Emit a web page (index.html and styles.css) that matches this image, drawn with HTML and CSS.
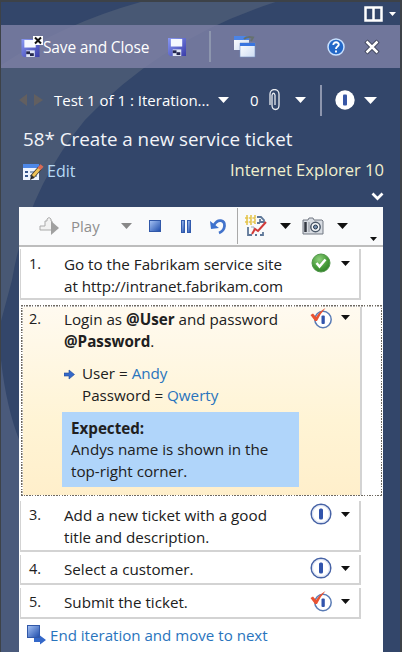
FILE: index.html
```html
<!DOCTYPE html>
<html lang="en">
<head>
<meta charset="utf-8">
<title>Test Runner</title>
<link rel="stylesheet" href="styles.css">
</head>
<body>
<svg class="defs" width="0" height="0" aria-hidden="true">
  <defs>
    <linearGradient id="blue" x1="0" y1="0" x2="1" y2="1"><stop offset="0" stop-color="#a9c5f5"/><stop offset="1" stop-color="#1c4bab"/></linearGradient>
    <linearGradient id="disk" x1="0" y1="0" x2="1" y2="1"><stop offset="0" stop-color="#8898f5"/><stop offset="1" stop-color="#3a3da8"/></linearGradient>
    <linearGradient id="win" x1="0" y1="0" x2="1" y2="1"><stop offset="0" stop-color="#fff"/><stop offset="1" stop-color="#cddcf2"/></linearGradient>
    <radialGradient id="green" cx=".4" cy=".3" r=".8"><stop offset="0" stop-color="#8ed07c"/><stop offset=".6" stop-color="#459a38"/><stop offset="1" stop-color="#2b7a26"/></radialGradient>
  </defs>
  <symbol id="floppy" viewBox="0 0 19 19"><path d="M0 0H19V19H2L0 17Z" fill="url(#disk)"/><path d="M3 1H15V9H3Z" fill="#f5f8ff"/><path d="M5 12H14V19H5Z" fill="#dfe5f5"/><path d="M5 13H9V16H5Z" fill="#23264d"/><path d="M9 15h4v3h-4z" fill="#23264d"/></symbol>
  <symbol id="active" viewBox="0 0 22 22"><circle cx="11" cy="11" r="9.800" fill="#fff" stroke="#4763a6" stroke-width="1.500"/><circle cx="11" cy="11" r="8.500" fill="none" stroke="#d5def1"/><rect x="9" y="5.500" width="4" height="11" rx="1.500" fill="#3154ac"/></symbol>
  <symbol id="verify" viewBox="0 0 22 22"><circle cx="13" cy="12.500" r="8.200" fill="#fff" stroke="#597bb5" stroke-width="1.500"/><rect x="11.500" y="8.500" width="3.300" height="8.500" rx="1" fill="#3154ac"/><path d="M.5 8L3 6.500L6 10Q10 4 15.500 1Q10 7 7 14H5Z" fill="#e95332"/></symbol>
  <symbol id="tri" viewBox="0 0 10 6" preserveAspectRatio="none"><path d="M0 0H10L5 6Z" fill="currentColor"/></symbol>
</svg>
<main class="runner">
  <svg class="backdrop" width="402" height="652" viewBox="0 0 402 652">
    <path d="M0 66Q65 22 148 0H282Q164 36 85 120Q27 190 12 280L0 325Z" fill="#485874"/>
    <path d="M0 350Q5 405 20 442V652H0Z" fill="#4a5a7b"/>
  </svg>
  <header class="caption">
    <svg class="columns" width="19" height="16"><path d="M1.500 1.500H17.500V14.500H1.500ZM9.500 1V15" fill="none" stroke="#fff" stroke-width="2.500"/></svg>
    <svg class="tri s7"><use href="#tri"/></svg>
  </header>
  <div class="toolbar">
    <svg class="saveclose" width="22" height="22"><use href="#floppy" x="0" y="3" width="19" height="18"/><rect x="12" y="0" width="10" height="9" fill="#fff"/><path d="M14 1.500L20 7.500M20 1.500L14 7.500" stroke="#111" stroke-width="2"/></svg>
    <span class="t save">Save and Close</span>
    <svg class="disk" width="18" height="18"><use href="#floppy" width="18" height="18"/></svg>
    <i class="rule"></i>
    <svg class="windows" width="23" height="23"><path d="M1 1H16V15H1Z" fill="url(#win)"/><path d="M1 1H16V5H1Z" fill="#4c84e6"/><path d="M11 4Q14 1 20 2.500L18 6" fill="none" stroke="#66716f" stroke-width="2"/><path d="M7 8H22V22H7Z" fill="url(#win)" stroke="#7792c4" stroke-width=".6"/><path d="M7 8H22V11H7Z" fill="#3975df"/></svg>
    <svg class="help" width="18" height="18"><circle cx="9" cy="9" r="8" fill="#2368c8" stroke="#c9e1ff" stroke-width="1.500"/><path d="M6.300 7C6.300 3.200 12 3.600 11.800 6.700C11.600 8.700 9 8.500 9 11M9 12.500V14.500" fill="none" stroke="#fff" stroke-width="1.900"/></svg>
    <svg class="close" width="16" height="16"><path d="M2 2L14 14M14 2L2 14" stroke="#3b4055" stroke-width="4.500"/><path d="M2.500 2.500L13.500 13.500M13.500 2.500L2.500 13.500" stroke="#fff" stroke-width="2.500"/></svg>
  </div>
  <div class="nav">
    <svg class="arrows" width="26" height="12"><path d="M9 0V12L1 6ZM16 0V12L25 6Z" fill="#625f60"/></svg>
    <span class="t test">Test 1 of 1 : Iteration...</span>
    <svg class="tri s10 a"><use href="#tri"/></svg>
    <span class="t count">0</span>
    <svg class="clip" width="12" height="22"><path d="M3 6V16C3 22 10 22 10 16V5C10-1 1-1 1 5V16M6 6V16M3 6Q4.500 2.500 6 6" fill="none" stroke="#e8ebf0" stroke-width="1.300"/></svg>
    <svg class="tri s10 b"><use href="#tri"/></svg>
    <i class="rule"></i>
    <svg class="state" width="20" height="20"><circle cx="10" cy="10" r="9.700" fill="#fff"/><rect x="8" y="4.500" width="4" height="11" rx="1" fill="#3857a6"/></svg>
    <svg class="tri s13"><use href="#tri"/></svg>
  </div>
  <h1 class="t title">58* Create a new service ticket</h1>
  <div class="meta">
    <svg class="pencil" width="22" height="18"><path d="M1 1H17V17H1Z" fill="#eef4ff"/><path d="M1 1H17V5H1Z" fill="#4e88e8"/><path d="M3 8h3v2H3zM3 12h3v2H3z" fill="#36568f"/><path d="M8 9H15M8 13H15" stroke="#93a8c6" stroke-width="2"/><path d="M10 14L18 5" stroke="#3c372d" stroke-width="4.500"/><path d="M11 13L18 5" stroke="#eec258" stroke-width="3"/><path d="M17 6L20 2.500" stroke="#d96b55" stroke-width="4"/><path d="M8 17L9 13L12 15Z" fill="#222"/></svg>
    <span class="t edit">Edit</span>
    <span class="t config">Internet Explorer 10</span>
  </div>
  <div class="expand"><svg width="13" height="9"><path d="M1.500 1.500L6.500 6.500L11.500 1.500" fill="none" stroke="#fff" stroke-width="2.700"/></svg></div>
  <section class="panel">
    <div class="play">
      <svg class="go" width="21" height="19"><path d="M1 9H6V4H8V2L10 .5L12 2V4H13V13H1Z" fill="#f2f2f2" stroke="#aaa"/><path d="M12 4L20 11L12 18Z" fill="#a0a0a0"/></svg>
      <span class="t playtext">Play</span>
      <svg class="tri s10 gray"><use href="#tri"/></svg>
      <svg class="stop" width="12" height="12"><rect x=".5" y=".5" width="11" height="11" fill="url(#blue)" stroke="#3158a8"/></svg>
      <svg class="pause" width="10" height="13"><rect x=".5" y=".5" width="3" height="12" fill="url(#blue)" stroke="#315aad"/><rect x="6.500" y=".5" width="3" height="12" fill="url(#blue)" stroke="#315aad"/></svg>
      <svg class="undo" width="17" height="17"><path d="M4 7C8 0 15 2 14.500 8Q14 13 9 15" fill="none" stroke="#4273cb" stroke-width="2.800"/><path d="M0 3L1 11L9 10Z" fill="#3c72cf"/></svg>
      <i class="split"></i>
      <svg class="bug" width="22" height="22"><path d="M0 3H11M0 7H11M2 0V10M6 0V10M10 0V9" stroke="#e5c650" stroke-width="1.600" stroke-dasharray="3 .7"/><path d="M12 2H16L19 5V7H15V4M3 12V20H7M10 20H12M15 20H18V17M12 8H15" fill="none" stroke="#5f7899" stroke-width="1.800"/><path d="M6 12H9V15" stroke="#9baabd" fill="none"/><path d="M7 19L10 14L13 16L21 7" fill="none" stroke="#d13b39" stroke-width="2"/></svg>
      <svg class="tri s10 black c"><use href="#tri"/></svg>
      <svg class="camera" width="22" height="18"><path d="M1 3H6L7 1H11L12 3H20L21 4V17H1Z" fill="#d8dce2" stroke="#727983"/><path d="M3.500 5V15" stroke="#343941" stroke-width="2.500"/><path d="M7 5V15" stroke="#8b919a"/><circle cx="13.500" cy="10" r="4.700" fill="#f6f8fa" stroke="#4c5969" stroke-width="1.500"/><circle cx="13.500" cy="10" r="2" fill="#7891b0" stroke="#27384c"/></svg>
      <svg class="tri s10 black d"><use href="#tri"/></svg>
      <svg class="tri s7 black overflow"><use href="#tri"/></svg>
    </div>
    <article class="step one">
      <b class="t no">1.</b>
      <div class="text"><div class="t">Go to the Fabrikam service site</div><div class="t url">at http://intranet.fabrikam.com</div></div>
      <svg class="status" viewBox="0 0 22 22"><circle cx="11" cy="11" r="9" fill="url(#green)" stroke="#51964a"/><path d="M6.500 11L9.500 14.500L15.500 7.500" fill="none" stroke="#fff" stroke-width="2.500"/></svg>
      <svg class="tri s8 black"><use href="#tri"/></svg>
    </article>
    <div class="selected">
      <article class="step two">
        <b class="t no">2.</b>
        <div class="text"><div class="t">Login as <strong>@User</strong> and password</div><div class="t">
          <strong>@Password</strong>.</div>
          <div class="params"><svg width="11" height="11"><path d="M0 4H5V1L10.500 5.500L5 10V7H0Z" fill="#3468c9" stroke="#244b99" stroke-width=".6"/></svg><div><div class="t">User = <a>Andy</a></div><div class="t">Password = <a>Qwerty</a></div></div></div>
        </div>
        <svg class="status"><use href="#verify"/></svg>
        <svg class="tri s8 black"><use href="#tri"/></svg>
        <div class="expected"><div class="t"><strong>Expected:</strong></div><div class="t">Andys name is shown in the</div><div class="t">top-right corner.</div></div>
      </article>
    </div>
    <article class="step three">
      <b class="t no">3.</b>
      <div class="text"><div class="t">Add a new ticket with a good</div><div class="t">title and description.</div></div>
      <svg class="status"><use href="#active"/></svg>
      <svg class="tri s8 black"><use href="#tri"/></svg>
    </article>
    <article class="step four">
      <b class="t no">4.</b>
      <div class="text"><div class="t">Select a customer.</div></div>
      <svg class="status"><use href="#active"/></svg>
      <svg class="tri s8 black"><use href="#tri"/></svg>
    </article>
    <article class="step five">
      <b class="t no">5.</b>
      <div class="text"><div class="t">Submit the ticket.</div></div>
      <svg class="status"><use href="#verify"/></svg>
      <svg class="tri s8 black"><use href="#tri"/></svg>
    </article>
    <div class="end"><svg width="20" height="20"><rect x=".5" y=".5" width="12" height="12" fill="url(#blue)" stroke="#3158a8"/><path d="M7 13H13V10.500L19 15L13 19.500V17H7Z" fill="#3468c9"/></svg><a class="t">End iteration and move to next</a></div>
  </section>
</main>
</body>
</html>
```
FILE: styles.css
```css
* { box-sizing: border-box; }
body { margin: 0; overflow: hidden; font-family: "Open Sans", "Noto Sans", sans-serif; font-size: 15.2px; color: #202020; }
svg { display: block; flex: none; }
.defs { position: absolute; }
.runner { position: relative; width: 402px; height: 652px; overflow: hidden; background: #33466a; border: solid #3d4248; border-width: 2px 2px 0 1px; isolation: isolate; }
.backdrop { position: absolute; inset: -2px auto auto -1px; z-index: -1; }
.t { white-space: nowrap; flex: none; }
.tri { height: 5px; color: #fff; }
.s7 { width: 7px; height: 4px; }
.s8 { width: 9px; height: 5px; }
.s10 { width: 11px; height: 6px; }
.s13 { width: 13px; height: 7px; }
.black { color: #111; }
.gray { color: #888; }

.caption { height: 23px; display: flex; align-items: center; justify-content: flex-end; gap: 6px; padding-right: 4px; }
.toolbar { height: 43px; display: flex; align-items: center; background: rgba(127, 130, 168, .8); color: #fff; padding-left: 20px; }
.toolbar .t { width: 106px; font-size: 15.5px; letter-spacing: -.15px; }
.disk { margin-left: 19px; }
.rule { width: 2px; height: 31px; background: #8d96ae; flex: none; }
.toolbar .rule { margin-left: 23px; }
.windows { margin-left: 22px; }
.help { margin-left: 71px; }
.close { margin-left: 19px; }

.nav { height: 60px; padding: 4px 0 0 17px; display: flex; align-items: center; color: #fff; font-size: 15px; }
.test { width: 155px; margin-left: 10px; }
.nav .a { margin-left: 9px; }
.count { width: 8px; margin-left: 21px; }
.clip { margin-left: 11px; }
.nav .b { margin-left: 14px; }
.nav .rule { margin-left: 14px; }
.state { margin-left: 13px; }
.nav .s13 { margin-left: 9px; }

.title { margin: 0; height: 25px; padding-left: 22px; color: #f2f4f9; font-size: 18.8px; font-weight: 400; line-height: 22px; }
.meta { height: 32px; display: flex; align-items: center; padding: 0 16px 0 21px; }
.pencil { margin-top: 5px; }
.edit { width: 30px; margin: 4px 0 0 3px; color: #b7daf5; font-size: 16px; }
.config { margin-left: auto; color: #f1f0ce; font-size: 16.5px; }
.expand { height: 22px; display: flex; justify-content: flex-end; padding: 7px 16px 0 0; }

.panel { width: 364px; height: 445px; margin-left: 18px; background: #fff; }
.play { height: 40px; display: flex; align-items: center; background: #f9fafb; border-bottom: 2px solid #bdbdbd; padding-left: 20px; }
.playtext { width: 29px; margin-left: 11px; color: #8e8e8e; font-size: 15px; }
.play .gray { margin-left: 21px; }
.stop { margin-left: 17px; }
.pause { margin-left: 20px; }
.undo { margin-left: 19px; }
.split { width: 1px; height: 36px; margin-left: 10px; background: #a9a9a9; flex: none; }
.bug { margin-left: 7px; }
.c { margin-left: 13px; }
.camera { margin-left: 11px; }
.d { margin-left: 13px; }
.overflow { margin: 26px 0 0 22px; }

.step { width: 341px; display: grid; grid-template-columns: 35px 246px 31px 1fr; align-items: start; padding: 4px 0 0 8px; background: #fff; border: solid #d3d3d3; border-width: 0 2px 2px 1px; line-height: 21.5px; }
.panel > .step { margin-left: 1px; }
.no { font-weight: 400; font-size: 14.5px; line-height: 20px; }
.url { letter-spacing: -.05px; }
.status { width: 22px; height: 22px; margin-top: -2px; }
.step .tri { margin-top: 7px; }
.one { height: 51px; margin-top: 2px; padding-top: 5px; }
.selected {
  --ink: #6e6961 0 1.5px, transparent 1.5px 2.7px;
  width: 361px; height: 191px; margin: 5px 0 0 2px; padding: 1.5px;
  background: repeating-linear-gradient(90deg, var(--ink)) top / 100% 1.5px no-repeat,
    repeating-linear-gradient(90deg, var(--ink)) bottom / 100% 1.5px no-repeat,
    repeating-linear-gradient(var(--ink)) left / 1.5px 100% no-repeat,
    repeating-linear-gradient(var(--ink)) right / 1.5px 100% no-repeat;
}
.two { width: 339px; height: 188px; padding: 2.5px 0 0 6.5px; border-left: 0; border-bottom: 0; background: linear-gradient(#fffaf0, #fff4d5 60%, #ffefcb); grid-template-rows: 102.5px 75px; }
.two .tri { margin-top: 6px; }
.params { display: flex; gap: 7px; margin-top: 11px; }
.params svg { margin-top: 6px; }
a { color: #2974bd; }
.expected { grid-column: 1 / -1; width: 237px; height: 75px; margin: 0 0 0 33px; padding: 6px 0 0 9px; background: #b0d5fa; }
.three { height: 51px; margin-top: 5px; }
.four { height: 30px; margin-top: 3px; }
.five { height: 31px; margin-top: 3px; }
.end { height: 34px; display: flex; align-items: center; gap: 3px; padding: 0 0 2px 8px; font-size: 15.1px; }
```
